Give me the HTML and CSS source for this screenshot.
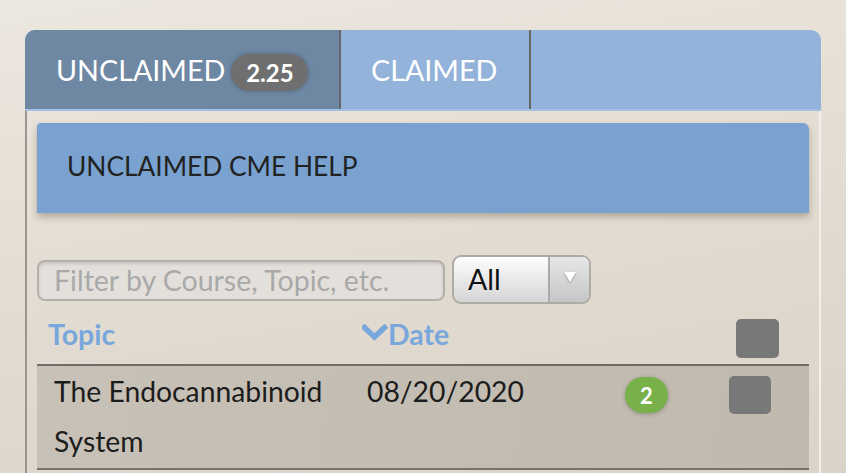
FILE: index.html
```html
<!DOCTYPE html>
<html>
<head>
<meta charset="utf-8">
<link rel="stylesheet" href="styles.css">
</head>
<body>
<div class="panel">
  <div class="tabs">
    <div class="tab tab-active">UNCLAIMED <span class="pill">2.25</span></div>
    <div class="tab tab-claimed">CLAIMED</div>
    <div class="tab-rest"></div>
  </div>
  <div class="panel-body">
    <div class="help">UNCLAIMED CME HELP</div>
    <div class="filters">
      <div class="filter-input">Filter by Course, Topic, etc.</div>
      <div class="select">
        <span class="select-value">All</span>
        <span class="select-arrow"><svg width="14" height="12" viewBox="0 0 14 12"><path d="M1 1 L13 1 L7 11 Z" fill="#fff"/></svg></span>
      </div>
    </div>
    <div class="thead">
      <div class="col-topic th">Topic</div>
      <div class="col-date th"><svg class="chev" width="26" height="17" viewBox="0 0 26 17"><path d="M2.5 3.5 L12.5 13 L22.5 3.5" fill="none" stroke="#79a7dc" stroke-width="5.5" stroke-linecap="square"/></svg>Date</div>
      <div class="col-badge"></div>
      <div class="col-check th-check"><span class="checkbox"></span></div>
    </div>
    <div class="trow">
      <div class="col-topic td">The Endocannabinoid System</div>
      <div class="col-date td">08/20/2020</div>
      <div class="col-badge td-badge"><span class="green">2</span></div>
      <div class="col-check td-check"><span class="checkbox checkbox-row"></span></div>
    </div>
  </div>
</div>
</body>
</html>
```

FILE: styles.css
```css
* { box-sizing: border-box; }
html, body { height: 100%; }
body {
  margin: 0;
  font-family: Lato, "Open Sans", sans-serif;
  background: linear-gradient(170deg, #ece7df 0%, #e2dbd1 55%, #dad3c8 100%);
  overflow: hidden;
}
.panel {
  margin: 30px 0 0 25px;
  width: 796px;
}
.tabs {
  display: flex;
  height: 81px;
  border-radius: 10px 10px 0 0;
  overflow: hidden;
  background: #94b3da;
  border-bottom: 2px solid #a3c0e3;
}
.tab {
  display: flex;
  align-items: center;
  color: #fff;
  font-size: 28.7px;
  border-right: 2px solid #666;
  padding-top: 1px;
}
.tab-active {
  width: 316px;
  padding-left: 31px;
  background: #6e87a3;
}
.tab-claimed {
  width: 190px;
  padding-left: 30px;
}
.tab-rest { flex: 1; }
.pill {
  display: inline-flex;
  align-items: center;
  justify-content: center;
  margin-left: 6px;
  width: 77px;
  height: 37px;
  border-radius: 19px;
  background: #6f6f6f;
  font-size: 24px;
  font-weight: bold;
  margin-top: 5px;
  box-shadow: 0 0 4px rgba(0,0,0,0.25);
}
.panel-body {
  border-left: 2px solid #9a958e;
  border-right: 2px solid #f3f0eb;
  padding: 12px 10px 0 10px;
  height: 400px;
}
.help {
  height: 90px;
  background: #79a2d1;
  border-radius: 4px 6px 0 0;
  box-shadow: 0 4px 7px rgba(80,70,50,0.35);
  color: #222;
  font-size: 26.3px;
  display: flex;
  align-items: center;
  padding-left: 30px;
  padding-bottom: 4px;
}
.filters {
  display: flex;
  align-items: center;
  margin-top: 42px;
  height: 49px;
}
.filter-input {
  width: 408px;
  height: 41px;
  margin-top: 2px;
  border: 2px solid #b4afa8;
  border-radius: 8px;
  background: #e3e0db;
  box-shadow: inset 0 2px 3px rgba(0,0,0,0.12);
  color: #a9a9a9;
  font-size: 28.5px;
  display: flex;
  align-items: center;
  padding-left: 15px;
  padding-bottom: 2px;
}
.select {
  margin-left: 7px;
  width: 139px;
  height: 49px;
  border: 2px solid #aeaaa4;
  border-radius: 9px;
  background: linear-gradient(#fdfdfd, #d5d5d5);
  display: flex;
  overflow: hidden;
}
.select-value {
  width: 96px;
  font-size: 28.5px;
  color: #111;
  display: flex;
  align-items: center;
  padding-left: 14px;
  padding-bottom: 2px;
  border-right: 2px solid #aaa;
}
.select-arrow {
  flex: 1;
  display: flex;
  align-items: center;
  justify-content: center;
  background: linear-gradient(#e6e6e6, #c6c6c6);
  padding-bottom: 6px;
}
.select-arrow svg { filter: drop-shadow(0 1px 1px rgba(0,0,0,0.3)); }
.thead {
  display: flex;
  margin-top: 10px;
  height: 52px;
  border-bottom: 2px solid #6f6b66;
}
.col-topic { width: 319px; }
.col-date { width: 250px; }
.col-badge { width: 105px; }
.col-check { flex: 1; }
.th {
  color: #79a7dc;
  font-weight: bold;
  font-size: 28.5px;
  line-height: 40px;
}
.col-topic.th { padding-left: 11px; }
.col-date.th { padding-left: 6px; display: flex; align-items: center; height: 40px; }
.chev { margin-top: -4px; }
.th-check { padding-left: 25px; padding-top: 5px; }
.checkbox {
  display: block;
  width: 43px;
  height: 39px;
  border-radius: 5px;
  background: #787878;
}
.checkbox-row { width: 42px; height: 38px; }
.trow {
  display: flex;
  background: linear-gradient(100deg, #c7c1b7, #c0b9ae);
  border-bottom: 2px solid #77726c;
  height: 104px;
}
.td {
  font-size: 28.3px;
  color: #1c1c1c;
  line-height: 50px;
}
.col-topic.td { padding-left: 17px; padding-right: 10px; }
.col-date.td { padding-left: 11px; }
.td-badge { padding-top: 11px; }
.green {
  display: flex;
  align-items: center;
  justify-content: center;
  width: 43px;
  height: 36px;
  border-radius: 18px;
  background: #78b04a;
  color: #fff;
  font-weight: bold;
  font-size: 22px;
  margin-left: 19px;
  box-shadow: 0 1px 4px rgba(0,0,0,0.25);
}
.td-check { padding-left: 18px; padding-top: 10px; }
```
